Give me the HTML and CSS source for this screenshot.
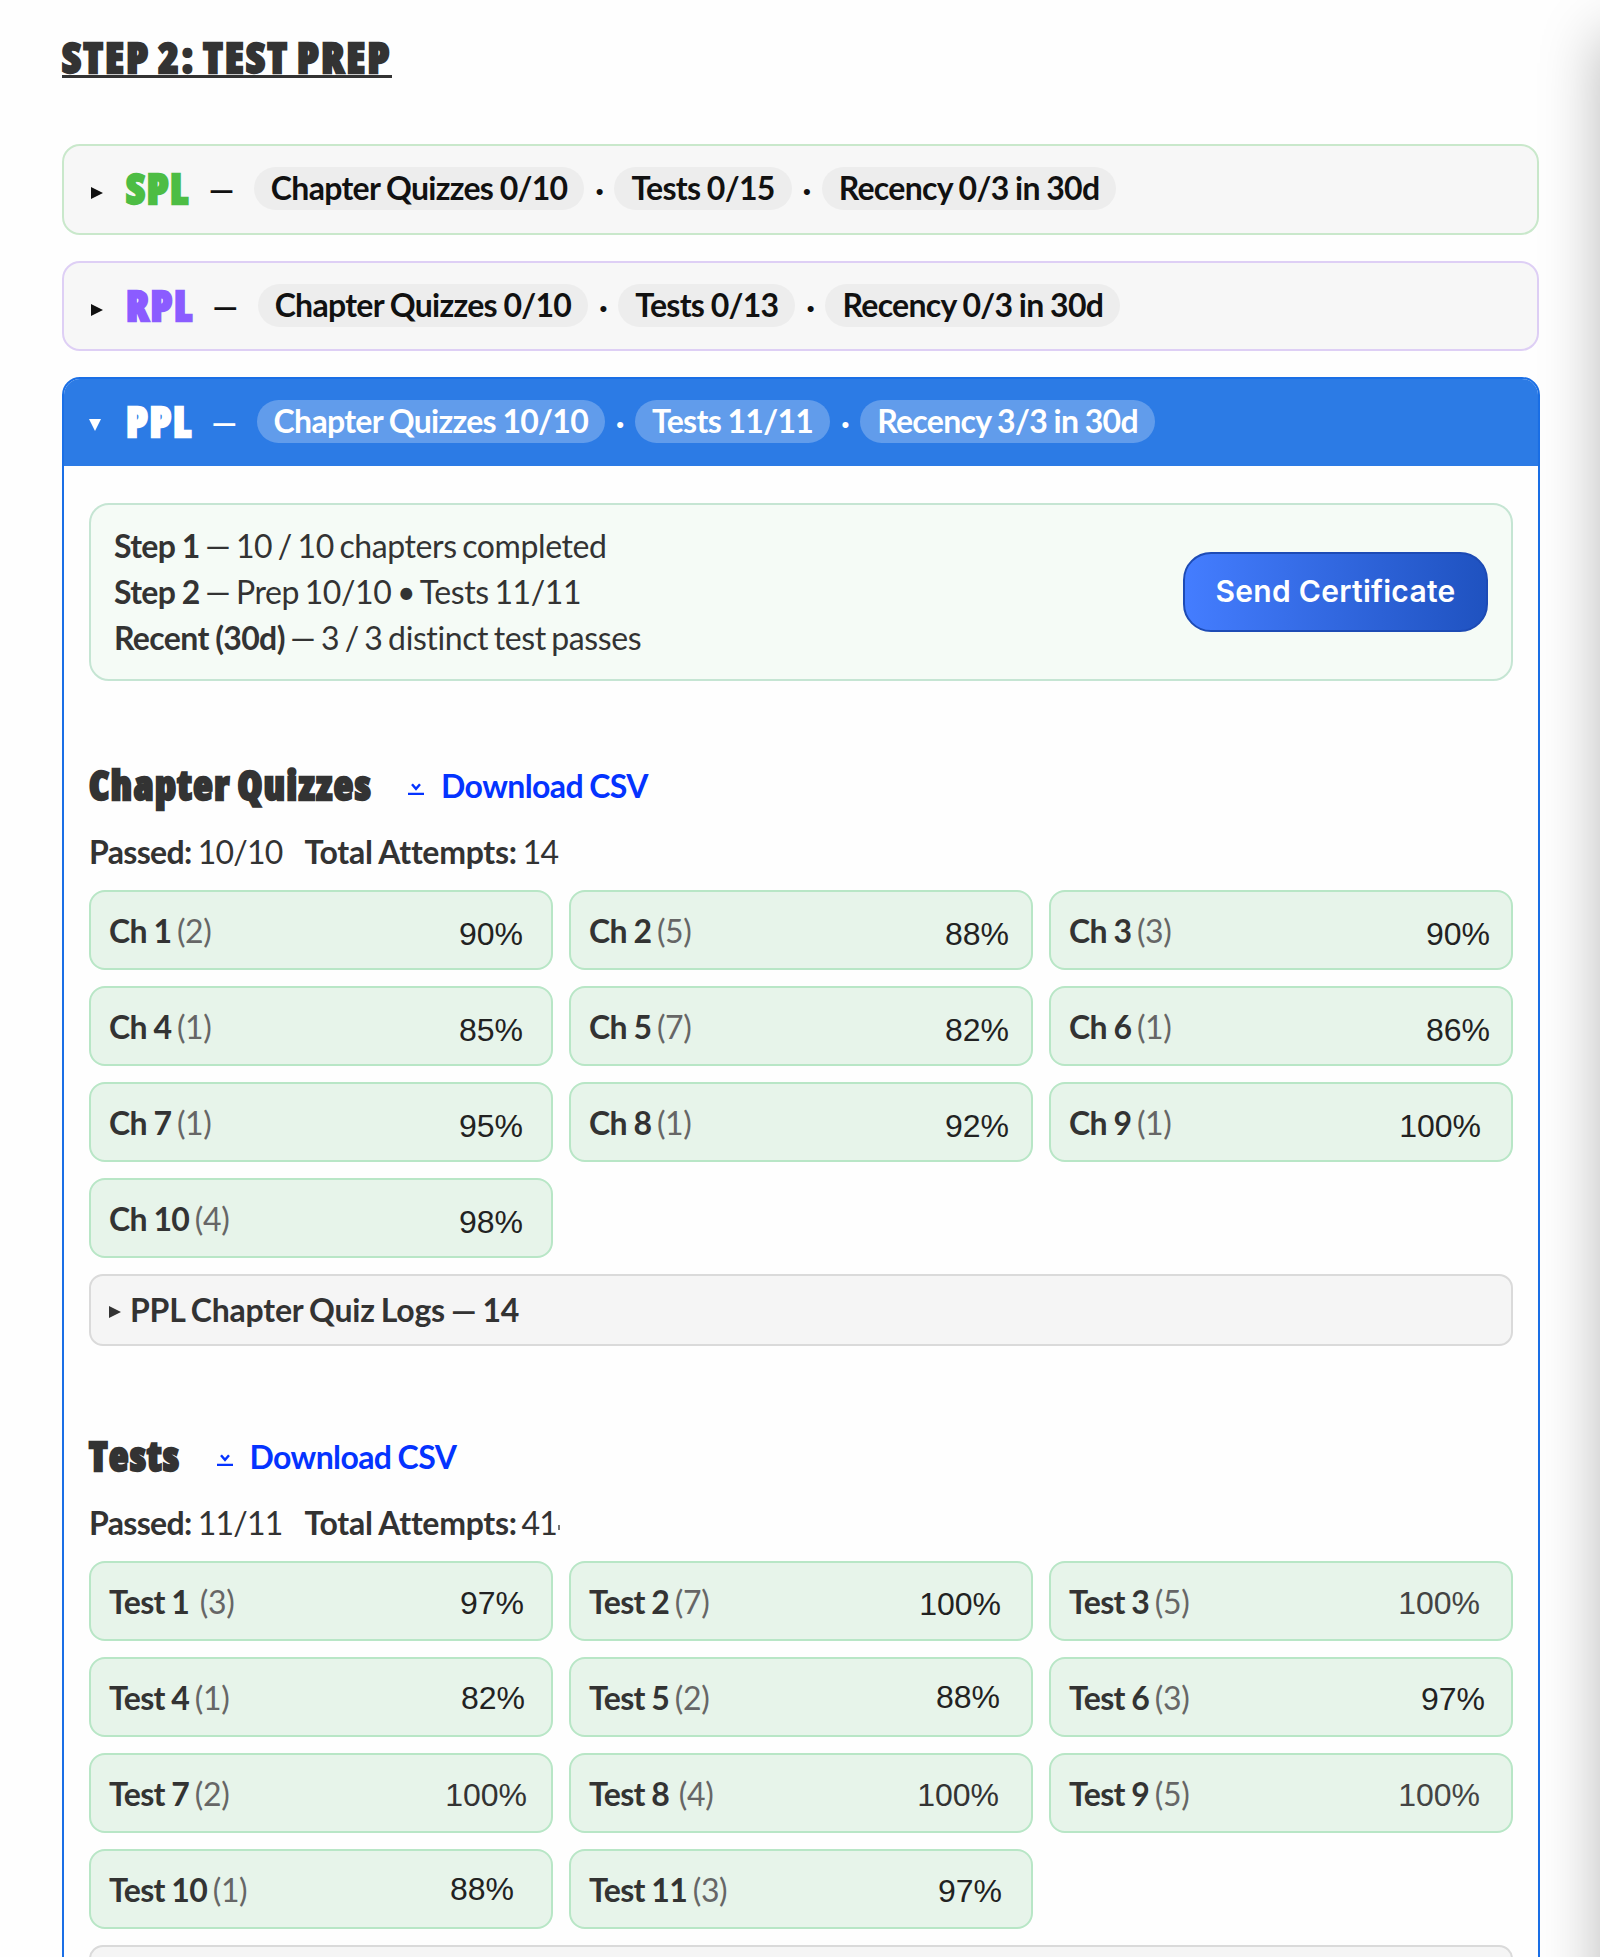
FILE: index.html
```html
<!DOCTYPE html>
<html lang="en">
<head>
<meta charset="utf-8">
<title>Step 2: Test Prep</title>
<link rel="stylesheet" href="styles.css">
</head>
<body>
<main class="page">
  <h1 class="page-title"><span class="display">STEP 2: TEST PREP</span></h1>

  <section class="license license-spl">
    <header class="license-head">
      <svg class="arrow" viewBox="0 0 12 12"><path d="M0 0L12 6L0 12Z"/></svg>
      <span class="code display">SPL</span><span class="dash">—</span>
      <span class="pill">Chapter Quizzes 0/10</span><span class="dot">·</span>
      <span class="pill">Tests 0/15</span><span class="dot">·</span>
      <span class="pill">Recency 0/3 in 30d</span>
    </header>
  </section>

  <section class="license license-rpl">
    <header class="license-head">
      <svg class="arrow" viewBox="0 0 12 12"><path d="M0 0L12 6L0 12Z"/></svg>
      <span class="code display">RPL</span><span class="dash">—</span>
      <span class="pill">Chapter Quizzes 0/10</span><span class="dot">·</span>
      <span class="pill">Tests 0/13</span><span class="dot">·</span>
      <span class="pill">Recency 0/3 in 30d</span>
    </header>
  </section>

  <section class="license license-ppl">
    <header class="license-head">
      <svg class="arrow" viewBox="0 0 12 12"><path d="M0 0L12 0L6 12Z"/></svg>
      <span class="code display">PPL</span><span class="dash">—</span>
      <span class="pill">Chapter Quizzes 10/10</span><span class="dot">·</span>
      <span class="pill">Tests 11/11</span><span class="dot">·</span>
      <span class="pill">Recency 3/3 in 30d</span>
    </header>
    <div class="license-body">
      <div class="status">
        <div class="status-lines">
          <div><b>Step 1</b> — 10 / 10 chapters completed</div>
          <div><b>Step 2</b> — Prep 10/10 • Tests 11/11</div>
          <div><b>Recent (30d)</b> — 3 / 3 distinct test passes</div>
        </div>
        <button class="send" type="button">Send Certificate</button>
      </div>

      <div class="block">
        <div class="block-head">
          <h2 class="display">Chapter Quizzes</h2>
          <a class="download"><svg class="download-icon" viewBox="0 0 16 12"><path d="M4 1.2L8 5.8L12 1.2M0 11H16"/></svg>Download CSV</a>
        </div>
        <div class="totals"><span><b>Passed:</b> 10/10</span><span><b>Total Attempts:</b> 14</span></div>
        <div class="grid chapters">
          <div class="cell"><span><b>Ch 1</b> <i>(2)</i></span><em>90%</em></div>
          <div class="cell"><span><b>Ch 2</b> <i>(5)</i></span><em>88%</em></div>
          <div class="cell"><span><b>Ch 3</b> <i>(3)</i></span><em>90%</em></div>
          <div class="cell"><span><b>Ch 4</b> <i>(1)</i></span><em>85%</em></div>
          <div class="cell"><span><b>Ch 5</b> <i>(7)</i></span><em>82%</em></div>
          <div class="cell"><span><b>Ch 6</b> <i>(1)</i></span><em>86%</em></div>
          <div class="cell"><span><b>Ch 7</b> <i>(1)</i></span><em>95%</em></div>
          <div class="cell"><span><b>Ch 8</b> <i>(1)</i></span><em>92%</em></div>
          <div class="cell"><span><b>Ch 9</b> <i>(1)</i></span><em>100%</em></div>
          <div class="cell"><span><b>Ch 10</b> <i>(4)</i></span><em>98%</em></div>
        </div>
        <div class="logs"><svg class="arrow" viewBox="0 0 12 12"><path d="M0 0L12 6L0 12Z"/></svg><span>PPL Chapter Quiz Logs — 14</span></div>
      </div>

      <div class="block">
        <div class="block-head">
          <h2 class="display">Tests</h2>
          <a class="download"><svg class="download-icon" viewBox="0 0 16 12"><path d="M4 1.2L8 5.8L12 1.2M0 11H16"/></svg>Download CSV</a>
        </div>
        <div class="totals"><span><b>Passed:</b> 11/11</span><span class="clipped"><b>Total Attempts:</b> 41</span></div>
        <div class="grid tests">
          <div class="cell"><span><b>Test 1</b> <i>(3)</i></span><em>97%</em></div>
          <div class="cell"><span><b>Test 2</b> <i>(7)</i></span><em>100%</em></div>
          <div class="cell"><span><b>Test 3</b> <i>(5)</i></span><em>100%</em></div>
          <div class="cell"><span><b>Test 4</b> <i>(1)</i></span><em>82%</em></div>
          <div class="cell"><span><b>Test 5</b> <i>(2)</i></span><em>88%</em></div>
          <div class="cell"><span><b>Test 6</b> <i>(3)</i></span><em>97%</em></div>
          <div class="cell"><span><b>Test 7</b> <i>(2)</i></span><em>100%</em></div>
          <div class="cell"><span><b>Test 8</b> <i>(4)</i></span><em>100%</em></div>
          <div class="cell"><span><b>Test 9</b> <i>(5)</i></span><em>100%</em></div>
          <div class="cell"><span><b>Test 10</b> <i>(1)</i></span><em>88%</em></div>
          <div class="cell"><span><b>Test 11</b> <i>(3)</i></span><em>97%</em></div>
        </div>
        <div class="logs"></div>
      </div>
    </div>
  </section>
</main>
</body>
</html>
```
FILE: styles.css
```css
* { box-sizing: border-box; }
html, body { margin: 0; height: 1957px; overflow: hidden; }
body {
  background: #fefefe;
  color: #333;
  font: 400 32px/46px Lato, "Liberation Sans", sans-serif;
  letter-spacing: -.4px;
  word-spacing: -2.2px;
}
b { font-weight: 700; letter-spacing: -.65px; word-spacing: -.6px; }
i, em { font-style: normal; }
h1, h2 { margin: 0; }

.page {
  position: relative;
  height: 1957px;
  padding: 36px 60px 0 62px;
  overflow: hidden;
}
/* soft shadow cast from beyond the right edge */
.page::after {
  content: "";
  position: absolute;
  left: 1600px;
  top: 35px;
  width: 100px;
  height: 2100px;
  box-shadow: 0 0 60px rgba(0,0,0,.27);
}
.display {
  font-family: "Open Sans", Lato, sans-serif;
  font-weight: 800;
  font-stretch: 75%;
  letter-spacing: 1.6px;
  word-spacing: -2px;
  -webkit-text-stroke: 2.3px currentColor;
}
.page-title {
  height: 108px;
  font-size: 42px;
  line-height: 42px;
}
.page-title .display {
  display: inline-block;
  height: 42px;
  border-bottom: 3px solid #333;
  letter-spacing: 2.4px;
}

.license {
  width: 1477px;
  margin-bottom: 26px;
  border: 2px solid;
  border-radius: 18px;
  background: #f7f7f7;
  color: #111;
}
.license-spl { height: 91px; border-color: #c9e8cb; }
.license-rpl { height: 90px; border-color: #decff5; }
.license-ppl {
  width: 1478px;
  height: 1600px;
  border-color: #1a6fe6;
  background: #fefefe;
  overflow: hidden;
}
.license-head {
  display: flex;
  align-items: center;
  height: 87px;
  padding-left: 27px;
  font-weight: 700;
}
.license-ppl .license-head { background: #2c7be5; color: #fff; padding-left: 25px; }
.license-ppl .license-head .code { margin-left: 25px; }
.license-ppl .arrow { margin-top: 4px; }
.arrow { width: 12px; height: 12px; fill: currentColor; margin-top: 7px; }
.code { margin: -3px 0 0 23px; font-size: 42px; }
.license-spl .code { color: #4dbd44; }
.license-rpl .code { color: #8b5cff; }
.dash { margin: -1px 20px 0 19px; }
.pill {
  height: 43px;
  margin-top: -3px;
  padding: 0 17px;
  border-radius: 22px;
  background: #ededed;
  line-height: 42px;
  letter-spacing: -.7px;
  word-spacing: -.6px;
}
.license-ppl .pill { background: rgba(255,255,255,.25); }
.dot { width: 30px; text-align: center; }

.license-body { padding: 37px 25px 0; color: #333; }
.status {
  display: flex;
  justify-content: space-between;
  align-items: center;
  height: 178px;
  padding: 0 23px;
  border: 2px solid #c5e5d3;
  border-radius: 20px;
  background: #f5fbf6;
}
.send {
  width: 305px;
  height: 80px;
  padding: 0 0 2px;
  border: 2px solid #1d4bb5;
  border-radius: 28px;
  background: linear-gradient(to right, #447dff, #1f52c0);
  color: #fff;
  font: 600 30px Inter, sans-serif;
  letter-spacing: .3px;
  word-spacing: 0;
}

.block { height: 671px; padding-top: 80px; }
.block-head { display: flex; height: 50px; align-items: center; }
.block-head h2 { font-size: 40px; margin-top: -3px; }
.download {
  display: flex;
  align-items: center;
  margin-left: 36px;
  color: #0433ff;
  font-weight: 700;
  letter-spacing: -.6px;
  word-spacing: -1px;
}
.download-icon {
  width: 16px;
  height: 12px;
  margin: 5px 17px 0 0;
  fill: none;
  stroke: currentColor;
  stroke-width: 2.4;
}
.totals { display: flex; gap: 22px; margin-top: 18px; height: 61px; }
.totals span { letter-spacing: -.8px; word-spacing: -1.2px; }
.totals span + span b { letter-spacing: -.3px; }
.clipped { display: flex; gap: 5px; }
.clipped::after {
  content: "";
  width: 2px;
  height: 5px;
  margin: 25px 0 0 -4px;
  background: #777;
}
.grid { display: grid; grid-template-columns: repeat(3, 464px); gap: 16px; }
.cell {
  display: flex;
  justify-content: space-between;
  align-items: center;
  height: 80px;
  padding: 0 29px 0 18px;
  border: 2px solid #b8e6c6;
  border-radius: 16px;
  background: #e7f4ea;
}
.cell span { margin-top: 1px; }
.cell i { color: #666; }
.cell em {
  margin-top: 5px;
  color: #222;
  font: 32px/46px "Liberation Sans", sans-serif;
  letter-spacing: 0;
}
.chapters em { transform: translate(1px, 1px); }
.chapters .cell:nth-child(3n + 2) em { transform: translate(7px, 1px); }
.chapters .cell:nth-child(3n) em { transform: translate(8px, 1px); }
.chapters .cell:nth-child(9) em { transform: translate(-1px, 1px); }
.tests .cell:nth-child(1) em { transform: translate(2px, -1px); }
.tests .cell:nth-child(1) i { margin-left: 5px; }
.tests .cell:nth-child(8) i { margin-left: 4px; }
.tests .cell:nth-child(2) em { transform: translate(-1px, 0); }
.tests .cell:nth-child(3) em { transform: translate(-2px, -1px); color: #444; }
.tests .cell:nth-child(4) em { transform: translate(3px, -2px); }
.tests .cell:nth-child(5) em { transform: translate(-2px, -3px); }
.tests .cell:nth-child(6) em { transform: translate(3px, -1px); }
.tests .cell:nth-child(7) em { transform: translate(5px, -1px); color: #333; }
.tests .cell:nth-child(8) em { transform: translate(-3px, -1px); color: #333; }
.tests .cell:nth-child(9) em { transform: translate(-2px, -1px); color: #444; }
.tests .cell:nth-child(10) em { transform: translate(-8px, -3px); }
.tests .cell:nth-child(11) em { transform: translate(0, -1px); }
.logs {
  display: flex;
  align-items: center;
  height: 72px;
  margin-top: 16px;
  padding-left: 18px;
  border: 2px solid #dadada;
  border-radius: 14px;
  background: #f5f5f5;
  font-weight: 700;
  letter-spacing: -.2px;
  word-spacing: -1.5px;
}
.logs span { margin-left: 9px; }
```
